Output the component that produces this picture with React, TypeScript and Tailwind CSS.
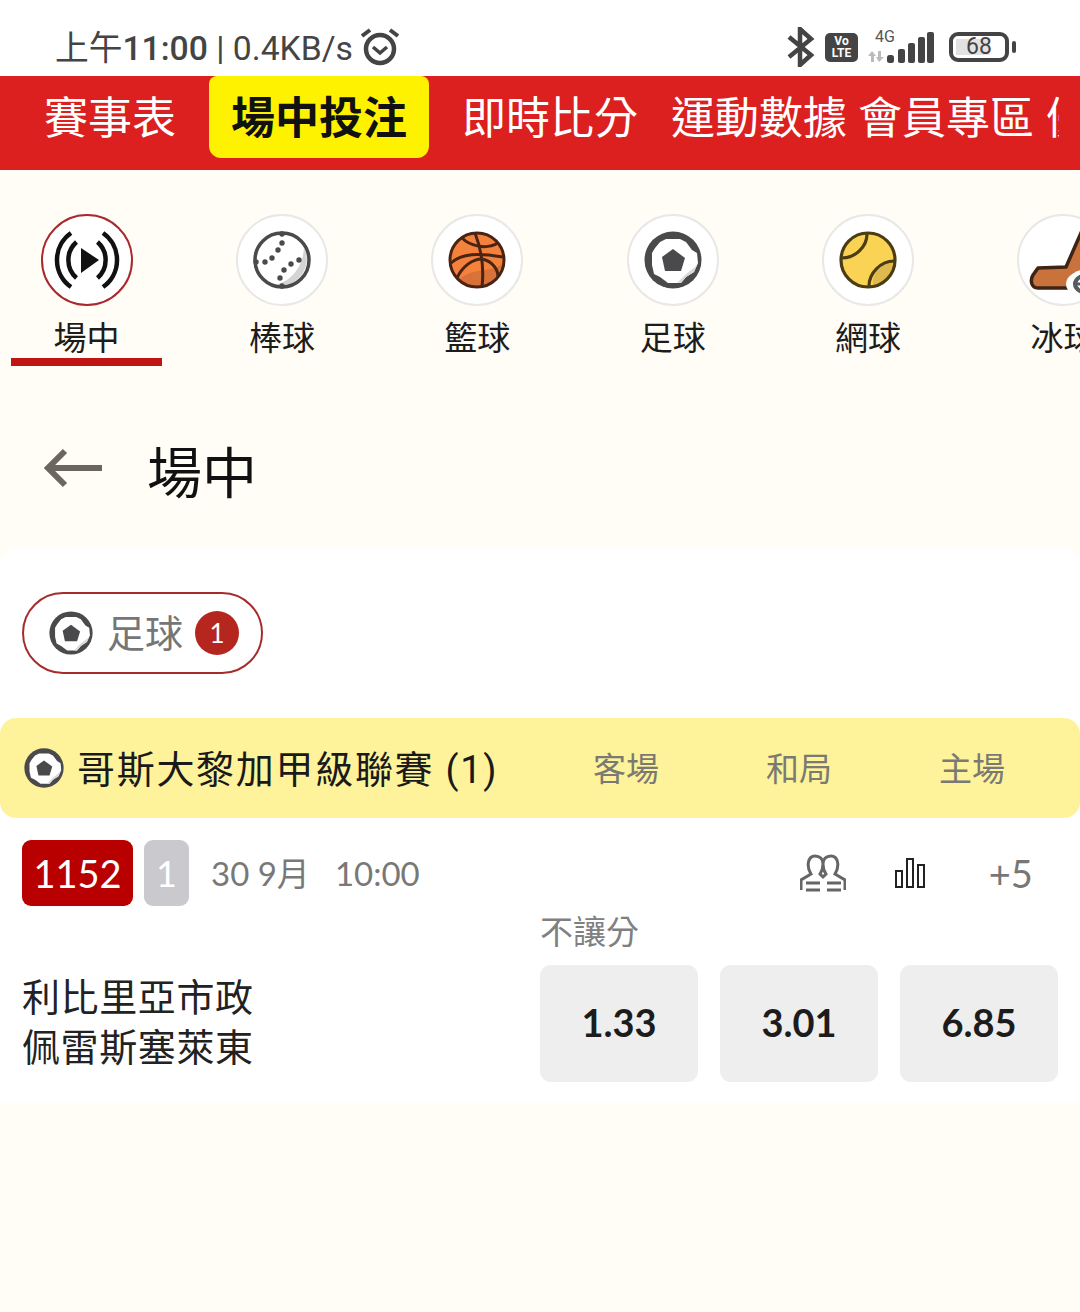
import React from "react";

const cjk = "font-['Roboto','Noto_Sans_CJK_TC',sans-serif]";
const lato = "font-['Lato','Noto_Sans_CJK_TC',sans-serif]";

function Soccer({ size = 44 }: { size?: number }) {
  return (
    <svg width={size} height={size} viewBox="0 0 58 58">
      <circle cx="29" cy="29" r="28.5" fill="#4a4a4c" />
      <path d="M16 11 L22 8 L36 8 L42 11 L48 19 L53 22 L54 32 L50 41 L42 46 L37 52 L24 52 L16 46 L10 43 L8 34 L8 22 L11 17 Z" fill="#fff" />
      <path d="M54 32 L50 41 L42 46 L37 52 L33 52 L42 43 L51 36 Z" fill="#d9d9d9" />
      <path d="M29 18 L41 27 L37 40 L21 40 L18 26 Z" fill="#4a4a4c" />
    </svg>
  );
}

function Live() {
  return (
    <svg width="66" height="60" viewBox="0 0 66 60" fill="none" stroke="#111" strokeWidth="4.5">
      <path d="M17 3 A33 33 0 0 0 17 57" />
      <path d="M49 3 A33 33 0 0 1 49 57" />
      <path d="M22.5 12 A24 24 0 0 0 22.5 48" />
      <path d="M43.5 12 A24 24 0 0 1 43.5 48" />
      <path d="M27 18 L45 30 L27 43 Z" fill="#111" stroke="none" />
    </svg>
  );
}

function Baseball() {
  return (
    <svg width="58" height="58" viewBox="0 0 58 58">
      <circle cx="29" cy="29" r="27" fill="#fff" />
      <path d="M51 16 A27 27 0 0 1 20 54 C36 52 50 38 51 16 Z" fill="#d4d4d4" />
      <circle cx="29" cy="29" r="27" fill="none" stroke="#4a4a4a" strokeWidth="3.5" />
      {[[29, 12], [25, 19], [19, 27], [12, 31], [46, 29], [38, 33], [31, 39], [27, 47], [29, 3], [29, 55], [3, 31]].map(([x, y], i) => (
        <circle key={i} cx={x} cy={y} r="2.7" fill="#4a4a4a" />
      ))}
    </svg>
  );
}

function Basketball() {
  return (
    <svg width="58" height="58" viewBox="0 0 58 58" fill="none">
      <circle cx="29" cy="29" r="27" fill="#f5823c" />
      <path d="M12 48 C24 36 48 42 54 32 C52 46 36 60 20 54 Z" fill="#d9713a" />
      <g stroke="#4a2412" strokeWidth="3">
        <circle cx="29" cy="29" r="27" />
        <path d="M27 2 C34 20 36 38 34 56" />
        <path d="M3 32 C14 22 30 22 55 26" />
        <path d="M14 7 C22 15 38 19 50 12" />
        <path d="M9 47 C14 36 24 28 34 28 C44 30 50 38 50 46" />
      </g>
    </svg>
  );
}

function Tennis() {
  return (
    <svg width="58" height="58" viewBox="0 0 58 58" fill="none">
      <circle cx="29" cy="29" r="27" fill="#fad355" />
      <path d="M54 30 A27 27 0 0 1 34 55 C32 44 42 32 54 30 Z" fill="#dfb94d" />
      <g stroke="#4c3c14" strokeWidth="3.2">
        <circle cx="29" cy="29" r="27" />
        <path d="M28 3 C28 16 16 27 3 27" />
        <path d="M55 30 C42 30 30 42 30 55" />
      </g>
    </svg>
  );
}

function Hockey() {
  return (
    <svg width="88" height="88" viewBox="0 0 88 88" className="absolute left-[3px] top-0">
      <path d="M44 51 L62 10 L84 10 L62 72 L16 72 C9 72 8 64 11 59 L16 52 Z" fill="#c9723c" stroke="#3d2414" strokeWidth="3.5" strokeLinejoin="round" />
      <ellipse cx="68" cy="68" rx="24" ry="15" fill="#fff" />
      <ellipse cx="70" cy="68" rx="17" ry="10" fill="none" stroke="#575c60" strokeWidth="4" />
      <path d="M52 68 L88 68" stroke="#575c60" strokeWidth="3" />
    </svg>
  );
}

function Sport({ label, icon, active }: { label: string; icon: React.ReactNode; active?: boolean }) {
  return (
    <div className={`flex w-[151px] shrink-0 flex-col items-center ${active ? "border-b-8 border-[#bf1515]" : "border-b-8 border-transparent"}`}>
      <div className={`relative flex size-[92px] items-center justify-center overflow-hidden rounded-full border-2 bg-white ${active ? "border-[#a82a2e]" : "border-[#e8e8e6]"}`}>
        {icon}
      </div>
      <div className="mt-[8px] h-[44px] whitespace-nowrap text-[33px] leading-[49px] text-[#1c1c1c]">{label}</div>
    </div>
  );
}

function NavItem({ children, className }: { children: React.ReactNode; className: string }) {
  return <span className={`mt-[19px] shrink-0 whitespace-nowrap text-[44px] leading-[48px] text-white ${className}`}>{children}</span>;
}

export default function App() {
  return (
    <div className={`${cjk} h-[1312px] w-[1080px] overflow-hidden bg-[#fffdf6]`}>
      <div className="flex h-[76px] items-center justify-between bg-white pr-[64px] pl-[55px] pt-[18px] text-[#444]">
        <div className="flex items-center">
          <span className="mt-[3px] text-[33.7px] leading-[40px] whitespace-nowrap">上午<span className="font-medium">11:00</span> | 0.4KB/s</span>
          <svg width="42" height="40" viewBox="0 0 42 40" className="ml-[6px]" fill="none" stroke="#444">
            <circle cx="21" cy="22" r="14" strokeWidth="4.5" />
            <path d="M14 20 L21 26 L28 20" strokeWidth="3.5" />
            <path d="M3 9 L11 3 M39 9 L31 3" strokeWidth="4" />
          </svg>
        </div>
        <div className="flex items-center">
          <svg width="30" height="40" viewBox="0 0 30 40" fill="none" stroke="#444" strokeWidth="4.5">
            <path d="M3 10 L25 28 L14 38 L14 2 L25 12 L3 30" />
          </svg>
          <span className="ml-[9px] flex h-[29px] w-[33px] flex-col items-center justify-center rounded-[5px] bg-[#444] text-[12px] leading-[12px] font-bold text-white">
            <span>Vo</span>
            <span>LTE</span>
          </span>
          <div className="relative ml-[9px] mt-[2px] h-[32px] w-[68px]">
            <span className="absolute -top-[4px] left-[8px] text-[16px] leading-[18px] text-[#555]">4G</span>
            <svg width="68" height="32" viewBox="0 0 68 32">
              <path d="M4 30 L4 24 L1 24 L5 19 L9 24 L7 24 L7 30 Z M11 19 L14 19 L14 25 L17 25 L12 30 L9 25 L11 25 Z" fill="#bbb" />
              <rect x="20" y="23" width="7" height="8" rx="2.5" fill="#444" />
              <rect x="31" y="17" width="7" height="14" rx="2" fill="#444" />
              <rect x="41" y="11" width="7" height="20" rx="2" fill="#444" />
              <rect x="51" y="5" width="7" height="26" rx="2" fill="#444" />
              <rect x="60" y="0" width="7" height="31" rx="2" fill="#444" />
            </svg>
          </div>
          <div className="relative ml-[14px] flex h-[30px] w-[60px] items-center justify-center rounded-[9px] border-4 border-[#444] bg-white">
            <div className="absolute inset-y-[3px] left-[3px] w-[34px] bg-[#e2e2e2]" />
            <span className="relative text-[23px] leading-[24px] text-[#444]">68</span>
          </div>
          <div className="ml-[3px] h-[12px] w-[4px] rounded-sm bg-[#444]" />
        </div>
      </div>

      <div className="flex h-[94px] items-start overflow-hidden bg-[#dc1f1f]">
        <NavItem className="ml-[44px]">賽事表</NavItem>
        <div className="ml-[33px] flex h-[82px] w-[220px] shrink-0 items-center justify-center rounded-b-[12px] rounded-t-[8px] bg-[#fff200] pt-[4px] text-[44px] font-bold text-[#111] whitespace-nowrap">場中投注</div>
        <NavItem className="ml-[33px]">即時比分</NavItem>
        <NavItem className="ml-[33px]">運動數據</NavItem>
        <NavItem className="ml-[11px]">會員專區</NavItem>
        <NavItem className="ml-[12px] w-[13px] overflow-hidden">優惠</NavItem>
      </div>

      <div className="flex overflow-hidden pt-[44px] pl-[11px] gap-x-[44.4px]">
        <Sport label="場中" icon={<Live />} active />
        <Sport label="棒球" icon={<Baseball />} />
        <Sport label="籃球" icon={<Basketball />} />
        <Sport label="足球" icon={<Soccer size={58} />} />
        <Sport label="網球" icon={<Tennis />} />
        <Sport label="冰球" icon={<Hockey />} />
      </div>

      <div className="flex h-[182px] items-start pl-[44px] pt-[73px]">
        <svg width="60" height="40" viewBox="0 0 60 40" fill="none" stroke="#6b665e" strokeWidth="6" className="mt-[9px]">
          <path d="M58 20 L5 20 M21 3 L4 20 L21 37" />
        </svg>
        <span className="ml-[43px] text-[55px] leading-[70px] text-[#111]">場中</span>
      </div>

      <div className="rounded-t-[18px] bg-white pb-[21px] pt-[44px]">
        <div className="ml-[22px] flex h-[82px] w-[241px] items-center rounded-full border-2 border-[#a62c2c] pl-[25px]">
          <Soccer />
          <span className="ml-[14px] pt-[2px] text-[38px] leading-[50px] text-[#767676]">足球</span>
          <span className={`${lato} ml-[12px] flex size-[44px] items-center justify-center rounded-full bg-[#b5261e] text-[26px] text-white`}>1</span>
        </div>

        <div className="mt-[44px] flex h-[100px] items-center rounded-[16px] bg-[#fef39a]">
          <div className="ml-[24px]"><Soccer size={40} /></div>
          <span className="ml-[13px] mt-[3px] w-[481px] whitespace-nowrap text-[38px] leading-[50px] tracking-[1.7px] text-[#1a1a1a]">哥斯大黎加甲級聯賽 (1)</span>
          <span className="ml-[35px] mt-[3px] w-[64px] whitespace-nowrap text-[33px] leading-[44px] text-[#7a7a72]">客場</span>
          <span className="ml-[109px] mt-[3px] w-[64px] whitespace-nowrap text-[33px] leading-[44px] text-[#7a7a72]">和局</span>
          <span className="ml-[109px] mt-[3px] w-[64px] whitespace-nowrap text-[33px] leading-[44px] text-[#7a7a72]">主場</span>
        </div>

        <div className="mt-[22px] flex h-[66px] items-center pl-[22px]">
          <span className={`${lato} flex h-[66px] w-[111px] items-center justify-center rounded-[9px] bg-[#b80000] text-[38px] text-white`}>1152</span>
          <span className={`${lato} ml-[11px] flex h-[66px] w-[45px] items-center justify-center rounded-[9px] bg-[#c9c9ce] text-[36px] text-white`}>1</span>
          <span className={`${lato} ml-[22px] text-[33px] leading-[40px] text-[#787878]`}>30 9月</span>
          <span className={`${lato} ml-[25px] text-[33px] leading-[40px] text-[#787878]`}>10:00</span>
          <svg width="46" height="38" viewBox="0 0 46 38" fill="none" stroke="#666" strokeWidth="3" className="ml-[380px]">
            <path d="M1 36 L1 26 L11 20 C6 12 8 2 15 2 C20 2 23 5 23 10 C23 5 26 2 31 2 C38 2 40 12 35 20 L45 26 L45 36" />
            <path d="M23 10 C23 14 22 17 20 20 L23 23 L26 20 C24 17 23 14 23 10" />
            <path d="M6 29 L20 29 M6 36 L20 36 M27 29 L41 29 M27 36 L41 36" />
          </svg>
          <svg width="32" height="32" viewBox="0 0 32 32" fill="none" stroke="#222" strokeWidth="2" className="ml-[48px]">
            <rect x="2" y="14" width="6" height="16" />
            <rect x="13" y="2" width="6" height="28" />
            <rect x="24" y="8" width="6" height="22" />
          </svg>
          <span className={`${lato} ml-[63px] text-[38px] leading-[44px] text-[#777]`}>+5</span>
        </div>

        <div className="mt-[6px] flex">
          <div className="mt-[61px] w-[540px] pl-[22px] text-[38px] leading-[50px] tracking-[0.6px] text-[#222]">
            <div>利比里亞市政</div>
            <div>佩雷斯塞萊東</div>
          </div>
          <div>
            <div className="h-[53px] text-[33px] leading-[42px] text-[#808080]">不讓分</div>
            <div className="flex gap-[22px]">
              {["1.33", "3.01", "6.85"].map((v) => (
                <div key={v} className={`${lato} flex h-[117px] w-[158px] items-center justify-center rounded-[11px] bg-[#eeeeee] pb-[2px] text-[38px] font-bold text-[#1c1c1c]`}>{v}</div>
              ))}
            </div>
          </div>
        </div>
      </div>
    </div>
  );
}
